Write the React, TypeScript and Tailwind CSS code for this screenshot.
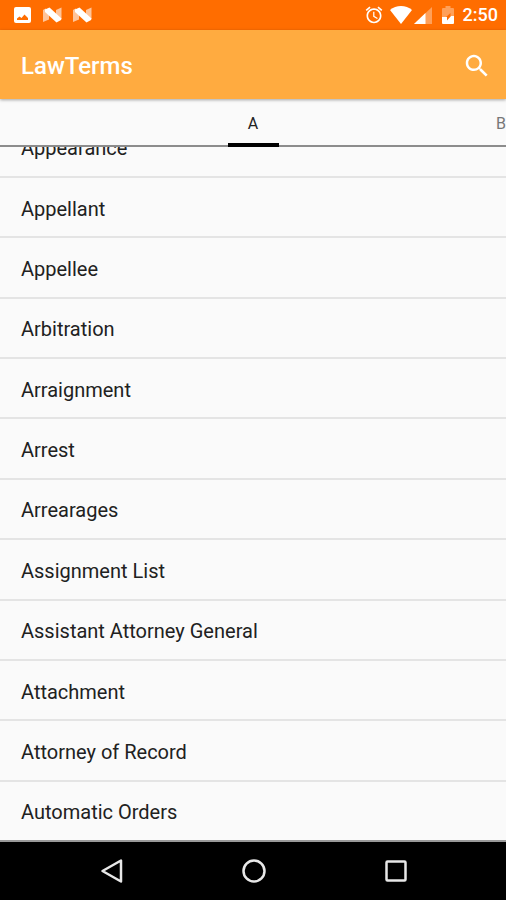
import type { ReactNode } from 'react';

const terms = [
    'Appellant',
    'Appellee',
    'Arbitration',
    'Arraignment',
    'Arrest',
    'Arrearages',
    'Assignment List',
    'Assistant Attorney General',
    'Attachment',
    'Attorney of Record',
    'Automatic Orders',
];

function NougatIcon() {
    return (
        <svg className="h-4 w-[19px]" viewBox="0 0 19 16" fill="#fff">
            <path d="M0 3l2.500-1.500L6 4.500v8L0 15z" opacity=".6" />
            <path d="M13 3l5.500-2.500V12L17 13.500 13 10z" opacity=".6" />
            <path d="M2 2.500 6.500.5 18.500 11.500 18 13l-4.500 2.500L2 5z" />
        </svg>
    );
}

function StatusBar() {
    return (
        <div className="flex h-[30px] items-center justify-between bg-[#ff6d00] pr-2 pl-[14px]">
            <div className="flex items-center gap-3">
                <svg className="h-4 w-[17px]" viewBox="0 0 17 16">
                    <rect width="17" height="16" rx="2" fill="#fff" />
                    <path d="M3 13V11.500L5.500 9.500l2 1.500 3-3.500 3.500 3.500v2z" fill="#ff6d00" />
                </svg>
                <div className="flex items-center gap-[11px]">
                    <NougatIcon />
                    <NougatIcon />
                </div>
            </div>
            <div className="flex items-center">
                <svg className="h-5 w-5" viewBox="0 0 24 24" fill="#fff">
                    <path d="M22 5.720l-4.600-3.860-1.290 1.530 4.600 3.860L22 5.720zM7.880 3.390L6.600 1.860 2 5.710l1.290 1.530 4.590-3.850zM12.500 8H11v6l4.750 2.850.75-1.230-4-2.370V8zM12 4c-4.970 0-9 4.030-9 9s4.020 9 9 9c4.970 0 9-4.030 9-9s-4.030-9-9-9zm0 16c-3.870 0-7-3.130-7-7s3.130-7 7-7 7 3.130 7 7-3.130 7-7 7z" />
                </svg>
                <svg className="ml-1.5 h-[18px] w-[22px]" viewBox="0 0 22 18" fill="#fff">
                    <path d="M11 18 0 4C3 1.500 7 0 11 0s8 1.500 11 4z" />
                </svg>
                <svg className="ml-0.5 h-[17px] w-[18px]" viewBox="0 0 18 17" fill="#fff">
                    <path d="M18 0v17H0z" opacity=".35" />
                    <path d="M11.500 6v11H0z" />
                </svg>
                <svg className="ml-2.5 h-[18px] w-3" viewBox="0 0 12 18" fill="#fff">
                    <path d="M3.500 0h5v2H11a1 1 0 0 1 1 1v7H8.500V7L4 11H0V3a1 1 0 0 1 1-1h2.500z" opacity=".35" />
                    <path d="M0 11h5v3.500L9 10h3v7a1 1 0 0 1-1 1H1a1 1 0 0 1-1-1z" />
                </svg>
                <span className="ml-[9px] text-lg leading-5 font-medium text-white">2:50</span>
            </div>
        </div>
    );
}

function AppBar() {
    return (
        <header className="z-10 flex h-[69px] items-center justify-between bg-[#ffab40] pt-0.5 pr-3.5 pl-[21px] shadow-[0_1px_3px_rgba(0,0,0,0.35)]">
            <h1 className="text-2xl font-medium text-white">LawTerms</h1>
            <button type="button" aria-label="Search">
                <svg className="h-[30px] w-[30px]" viewBox="0 0 24 24" fill="#fff">
                    <path d="M15.500 14h-.79l-.28-.27C15.410 12.590 16 11.110 16 9.500 16 5.910 13.090 3 9.500 3S3 5.910 3 9.500 5.910 16 9.500 16c1.610 0 3.090-.59 4.230-1.570l.27.28v.79l5 4.990L20.490 19l-4.990-5zm-6 0C7.010 14 5 11.990 5 9.500S7.010 5 9.500 5 14 7.010 14 9.500 11.990 14 9.500 14z" />
                </svg>
            </button>
        </header>
    );
}

function LetterTabs() {
    return (
        <div role="tablist" className="flex h-12 border-b-2 border-[#8c8c8c]">
            <div className="flex-1" />
            <button type="button" role="tab" aria-selected="true" className="-mb-0.5 w-[51px] border-b-4 border-black pt-1.5 text-base text-[#222]">
                A
            </button>
            <div className="flex flex-1 justify-end">
                <button type="button" role="tab" aria-selected="false" className="pt-1 text-base text-[#777]">
                    B
                </button>
            </div>
        </div>
    );
}

function NavButton({ label, children }: { label: string; children: ReactNode }) {
    return (
        <button type="button" aria-label={label} className="flex h-12 w-12 items-center justify-center">
            <svg className="h-6 w-6" viewBox="0 0 24 24" fill="none" stroke="#e8e8e8" strokeWidth="2.500" strokeLinejoin="round">
                {children}
            </svg>
        </button>
    );
}

export default function App() {
    return (
        <div className="flex min-h-screen flex-col overflow-hidden bg-[#fafafa] font-[Roboto,sans-serif]">
            <StatusBar />
            <AppBar />
            <LetterTabs />

            <ul className="flex flex-1 flex-col text-xl leading-6 text-[#212121]">
                {/* Scrolled partly under the tabs */}
                <li className="flex h-[31px] items-end overflow-hidden border-b-2 border-[#e4e4e4] pb-4 pl-[21px]">Appearance</li>
                {terms.map((term) => (
                    <li key={term} className="flex min-h-14 flex-1 items-center border-b-2 border-[#e4e4e4] pt-[3px] pl-[21px] last:border-[#999]">
                        {term}
                    </li>
                ))}
            </ul>

            <nav className="flex h-[58px] items-center justify-center gap-[94px] bg-black pl-0.5">
                <NavButton label="Back">
                    <path d="M21 1.500v21L2.500 12z" />
                </NavButton>
                <NavButton label="Home">
                    <circle cx="12" cy="12" r="10.500" />
                </NavButton>
                <NavButton label="Recent apps">
                    <rect x="2.500" y="2.500" width="19" height="19" rx="1" />
                </NavButton>
            </nav>
        </div>
    );
}
